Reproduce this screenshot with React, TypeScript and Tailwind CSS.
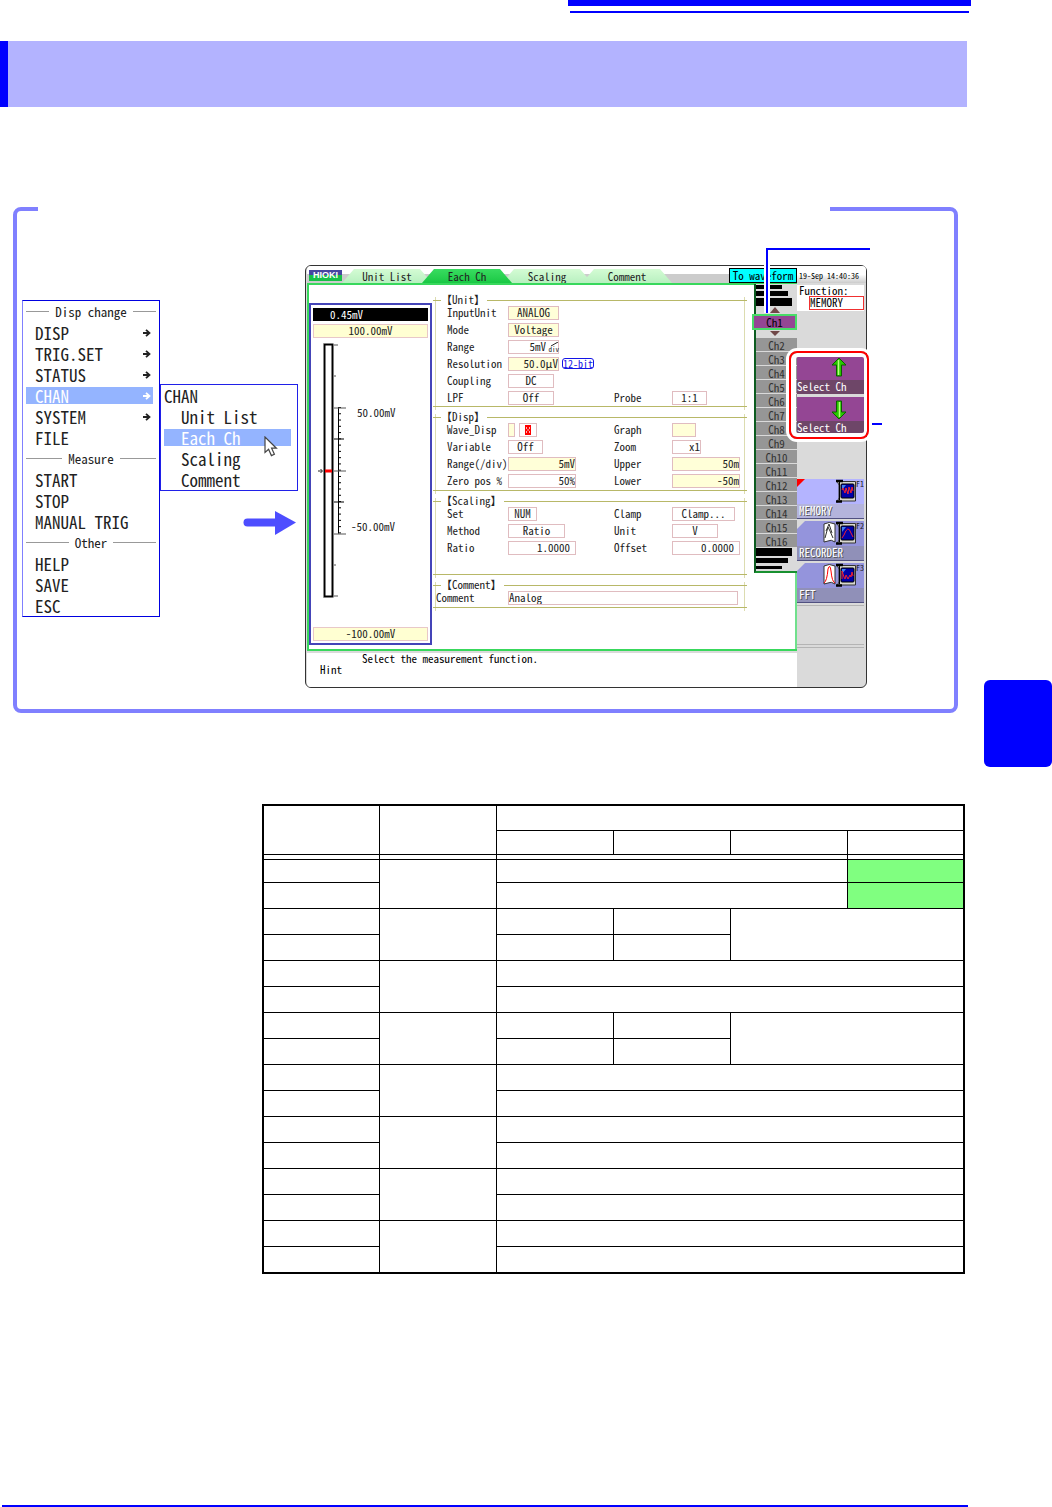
import { useState } from 'react'
import clsx from 'clsx'

const MENU = [
  {
    title: 'Disp change',
    items: ['DISP', 'TRIG.SET', 'STATUS', 'CHAN', 'SYSTEM', 'FILE'],
  },
  { title: 'Measure', items: ['START', 'STOP', 'MANUAL TRIG'] },
  { title: 'Other', items: ['HELP', 'SAVE', 'ESC'] },
]
const WITH_SUBMENU = ['DISP', 'TRIG.SET', 'STATUS', 'CHAN', 'SYSTEM']
const SUBMENU = ['Unit List', 'Each Ch', 'Scaling', 'Comment']
const CHANNELS = [2, 3, 4, 5, 6, 7, 8, 9, 10, 11, 12, 13, 14, 15, 16]

const MENU_ITEM =
  'mx-[3px] flex h-[21px] w-[127px] items-center border-y-2 border-transparent bg-clip-padding text-[17px] leading-[17px]'

function MenuArrow() {
  return (
    <svg width="8" height="8" viewBox="0 0 8 8" fill="none" stroke="currentColor" strokeWidth="1.8">
      <path d="M0 4H6.500M3 0.800L6.500 4L3 7.200" />
    </svg>
  )
}

function MainMenu() {
  return (
    <nav className="mt-[89px] w-[138px] shrink-0 border border-[#0000e0] border-l-[#8080ff] bg-white text-[#222]">
      {MENU.map((group) => (
        <div key={group.title}>
          <div className="flex h-[21px] items-center gap-1.5 px-[3px] text-[13px] leading-[21px]">
            <span className="h-px flex-1 bg-[#999]" />
            <span>{group.title}</span>
            <span className="h-px flex-1 bg-[#999]" />
          </div>
          {group.items.map((item) => (
            <button
              key={item}
              className={clsx(
                MENU_ITEM,
                'justify-between pr-0.5 pl-[9px]',
                item === 'CHAN' && 'bg-[#94b4ff] text-white',
              )}
            >
              {item}
              {WITH_SUBMENU.includes(item) && <MenuArrow />}
            </button>
          ))}
        </div>
      ))}
    </nav>
  )
}

function SubMenu() {
  return (
    <div className="mt-[173px] w-[138px] shrink-0">
      <nav className="relative border border-[#2020e8] bg-white text-[#222]">
        <div className="flex h-[21px] items-center pl-[3px] text-[17px] leading-[17px]">CHAN</div>
        {SUBMENU.map((item) => (
          <button
            key={item}
            className={clsx(MENU_ITEM, 'pl-[17px]', item === 'Each Ch' && 'bg-[#94b4ff] text-white')}
          >
            {item}
          </button>
        ))}
        <svg className="absolute top-[51px] left-[103px]" width="14" height="21" viewBox="0 0 14 21">
          <path
            d="M1 1V16.500L4.600 13.200L7.400 19.600L10.400 18.200L7.600 12.200H12.400Z"
            fill="#fff"
            stroke="#444"
            strokeWidth="1.2"
          />
        </svg>
      </nav>
      <svg className="mt-5 ml-[83px]" width="54" height="24" viewBox="0 0 54 24">
        <path d="M4.500 11.500H34" stroke="#4d4dff" strokeWidth="8" strokeLinecap="round" />
        <path d="M32 0L53 11.500L32 24Z" fill="#4d4dff" />
      </svg>
    </div>
  )
}

const TABS = ['Unit List', 'Each Ch', 'Scaling', 'Comment']

function TabBar({ active, onChange }: { active: string; onChange: (tab: string) => void }) {
  return (
    <div className="flex h-[17px] items-end rounded-tl bg-gradient-to-b from-white from-50% to-[#ccc] to-50% pl-[2px]">
      <div className="mb-0.5 h-[11px] w-[33px] bg-gradient-to-b from-[#4646a0] from-50% to-[#18c048] to-50% text-center font-['Liberation_Sans',sans-serif] text-[9px] leading-[11px] font-bold text-white">
        HIOKI
      </div>
      {TABS.map((tab) => (
        <button
          key={tab}
          onClick={() => onChange(tab)}
          className={clsx(
            'h-[14px] w-[90px] text-[11px] leading-[14px] text-[#222] [clip-path:polygon(12px_0,78px_0,100%_100%,0_100%)]',
            tab !== 'Unit List' && '-ml-[10px]',
            tab === active
              ? 'z-10 bg-gradient-to-b from-[#38dc60] to-[#18c844]'
              : 'bg-gradient-to-b from-[#d4fcd4] to-[#b8f0c0]',
          )}
        >
          {tab}
        </button>
      ))}
      <span className="flex-1" />
      <button className="h-[15px] w-[68px] border border-black bg-[#00ffff] text-center text-[11px] leading-[13px]">
        To waveform
      </button>
    </div>
  )
}

function Meter() {
  const minor = Array.from({ length: 21 }, (_, i) => 69 + i * 6.27)
  return (
    <div className="mt-[18px] flex h-[342px] w-[123px] shrink-0 flex-col border-2 border-[#4444b8] px-0.5 pt-0.5 pb-0.5 text-[11px] text-[#222]">
      <div className="mt-px mb-[3px] h-[13px] bg-black pl-[17px] leading-[13px] text-white">0.45mV</div>
      <div className="h-[14px] border border-[#e8c8c8] bg-[#ffffd2] text-center leading-[11px]">100.00mV</div>
      <svg className="flex-1" width="113" height="288" viewBox="0 0 113 288">
        <rect x="11.500" y="6" width="8" height="252" fill="#fff" stroke="#000" strokeWidth="2" />
        <path d="M10.500 5V259" stroke="#888" />
        <path d="M25.500 69V195" stroke="#000" />
        <g stroke="#000">
          {minor.map((y) => (
            <path key={y} d={`M25 ${y}H28`} />
          ))}
        </g>
        <g stroke="#555">
          <path d="M21 6.500H25M21 37.500H23M21 226.500H23M21 257.500H25" />
          <path d="M21 69.500H33M21 132.500H33M21 195.500H33" />
        </g>
        <path d="M21 100.500H31M21 163.500H31" stroke="#000" />
        <rect x="12" y="131" width="7" height="3" fill="#f00" />
        <path d="M5 132.500H9M7.500 130.500L9.500 132.500L7.500 134.500" fill="none" stroke="#222" />
        <text x="44" y="78" fontSize="11" fill="#222">50.00mV</text>
        <text x="38" y="192" fontSize="11" fill="#222">-50.00mV</text>
      </svg>
      <div className="h-[14px] border border-[#e8c8c8] bg-[#ffffd2] text-center leading-[11px]">-100.00mV</div>
    </div>
  )
}

interface FieldProps {
  label: string
  value: string
  className: string
  yellow?: boolean
}

function Field({ label, value, className, yellow }: FieldProps) {
  const id = 'field-' + label
  return (
    <>
      <label htmlFor={id} className="leading-[17px] whitespace-nowrap">{label}</label>
      <div className="flex h-[17px] items-center">
        <input
          id={id}
          defaultValue={value}
          className={clsx(
            'h-[14px] min-w-0 border border-[#e0bcc0] pb-0.5 leading-3',
            yellow ? 'bg-[#ffffd8]' : 'bg-white',
            className,
          )}
        />
        {label === 'Resolution' && (
          <span className="ml-[3px] h-[11px] w-8 shrink-0 rounded-[3px] border border-[#1414e6] text-center text-[10px] leading-[9px] whitespace-nowrap text-[#1414e6]">
            12-bit
          </span>
        )}
        {label === 'Range' && (
          <span className="-ml-3 flex w-3 flex-col items-end">
            <svg width="8" height="4" viewBox="0 0 8 4"><path d="M0 4L7 0" stroke="#222" /></svg>
            <span className="text-[7px] leading-[6px]">div</span>
          </span>
        )}
      </div>
    </>
  )
}

const TWO_COLUMNS = 'grid-cols-[61px_106px_58px_1fr] pl-[11px]'

function Group({ title, className, children }: { title: string; className: string; children: React.ReactNode }) {
  return (
    <section className="mx-[3px] border-x border-[#dcdcb0] pb-[3px]">
      <h3 className="-mx-[3px] flex h-[7px] items-center text-[11px] leading-[11px]">
        <span className="h-px w-2 bg-[#b8b868]" />
        <span className="pb-0.5">{title}</span>
        <span className="ml-0.5 h-px flex-1 bg-[#b8b868]" />
      </h3>
      <div className={clsx('grid', className)}>{children}</div>
      <div className="-mx-[3px] h-px bg-[#b8b868]" />
    </section>
  )
}

function ChannelForm() {
  return (
    <form className="mt-3 mr-1.5 flex min-w-0 flex-1 flex-col gap-1 text-[11px] text-[#222]">
      <Group title="【Unit】" className={TWO_COLUMNS}>
        <Field label="InputUnit" value="ANALOG" className="w-[51px] text-center" yellow />
        <span className="col-span-2" />
        <Field label="Mode" value="Voltage" className="w-[51px] text-center" yellow />
        <span className="col-span-2" />
        <Field label="Range" value="5mV" className="w-[51px] pr-3 text-right" />
        <span className="col-span-2" />
        <Field label="Resolution" value="50.0μV" className="w-[51px] text-right" yellow />
        <span className="col-span-2" />
        <Field label="Coupling" value="DC" className="w-[46px] text-center" />
        <span className="col-span-2" />
        <Field label="LPF" value="Off" className="w-[46px] text-center" />
        <Field label="Probe" value="1:1" className="w-[35px] text-center" />
      </Group>
      <Group title="【Disp】" className={clsx(TWO_COLUMNS, 'pb-px')}>
        <span className="leading-[17px]">Wave_Disp</span>
        <div className="flex items-center gap-1">
          <button type="button" aria-label="Wave display" className="h-[14px] w-[7px] border border-[#e0bcc0] bg-[#ffffd8]" />
          <button
            type="button"
            aria-label="Wave color"
            className="flex h-[14px] w-[18px] items-center justify-center border border-[#e0bcc0] bg-white"
          >
            <svg width="6" height="10" viewBox="0 0 6 10">
              <rect width="6" height="10" fill="#f00" />
              <path d="M1.500 2V4M4.500 2V4M3 4V6M1.500 6V8M4.500 6V8" stroke="#ffb0b0" />
            </svg>
          </button>
        </div>
        <Field label="Graph" value="" className="w-6" yellow />
        <Field label="Variable" value="Off" className="w-[35px] text-center" />
        <Field label="Zoom" value="x1" className="w-[29px] text-right" />
        <Field label="Range(/div)" value="5mV" className="w-[68px] text-right" yellow />
        <Field label="Upper" value="50m" className="w-[68px] text-right" yellow />
        <Field label="Zero pos %" value="50%" className="w-[68px] text-right" />
        <Field label="Lower" value="-50m" className="w-[68px] text-right" yellow />
      </Group>
      <Group title="【Scaling】" className={clsx(TWO_COLUMNS, 'pb-[18px]')}>
        <Field label="Set" value="NUM" className="w-[29px] text-center" />
        <Field label="Clamp" value="Clamp..." className="w-[63px] text-center" />
        <Field label="Method" value="Ratio" className="w-[57px] text-center" />
        <Field label="Unit" value="V" className="w-[46px] text-center" />
        <Field label="Ratio" value="1.0000" className="w-[68px] pr-[5px] text-right" />
        <Field label="Offset" value="0.0000" className="w-[68px] pr-[5px] text-right" />
      </Group>
      <Group title="【Comment】" className="grid-cols-[72px_1fr] pr-1.5 pb-px">
        <Field label="Comment" value="Analog" className="w-full" />
      </Group>
    </form>
  )
}

function ChannelList() {
  return (
    <div className="-mt-px flex h-[289px] w-[43px] shrink-0 flex-col border-b-2 border-l-2 border-b-[#189030] border-l-[#0c5c20] bg-[#dadada] text-center text-[11px] text-[#333]">
      <svg className="shrink-0" width="41" height="30" viewBox="0 0 41 30">
        <path d="M0 1H26V5H0ZM0 7H32V12H0ZM0 14H36V22H0Z" fill="#000" />
        <path d="M19 23L24 29H14Z" fill="#704848" />
      </svg>
      <button className="-ml-1 h-4 w-[45px] shrink-0 border-2 border-[#48dc68] bg-[#944694] leading-[10px] text-black">
        Ch1
      </button>
      <svg className="shrink-0" width="41" height="8" viewBox="0 0 41 8">
        <path d="M14 1H24L19 6Z" fill="#704848" />
      </svg>
      {CHANNELS.map((ch) => (
        <button key={ch} className="mb-px h-[13px] shrink-0 bg-[#969696] leading-3">
          Ch{ch}
        </button>
      ))}
      <svg className="shrink-0" width="41" height="23" viewBox="0 0 41 23">
        <path d="M0 0H36V8H0ZM0 10H32V15H0ZM0 18H26V21H0Z" fill="#000" />
      </svg>
    </div>
  )
}

function SelectKey({ down }: { down?: boolean }) {
  return (
    <button className="flex h-[38px] w-[67px] flex-col bg-[#944694] text-[11px] text-white">
      <svg className={clsx('ml-[33px] h-[24px] shrink-0', down && 'rotate-180')} width="18" height="24" viewBox="0 0 18 24">
        <path d="M9 2L16 9H11.500V20H6.500V9H2Z" fill="#28c800" stroke="#0a5c00" />
        <path d="M8.500 4V19" stroke="#b8ff80" strokeWidth="1.5" />
      </svg>
      <span className="h-[14px] w-full bg-[#6e4668] text-left leading-3">Select Ch</span>
    </button>
  )
}

function Monitor({ wave }: { wave: string }) {
  return (
    <g>
      <path d="M1 2L4 2.500H19.500V22H4L1 23L3 19V6Z" fill="#d8d8d0" stroke="#333" />
      <path d="M0 2H7M0 22.500H6" stroke="#000" strokeWidth="2.500" />
      <path d="M3.500 3V21" stroke="#000" />
      <rect x="5" y="5" width="13" height="14" rx="1" fill="#0000a8" stroke="#000" />
      <path d="M6 6H10L6 11Z" fill="#4080f0" />
      <path d={wave} fill="none" stroke="#f02030" />
    </g>
  )
}

const FUNCTIONS = [
  { name: 'MEMORY', key: 'F1', wave: 'M6 11L7 9L9 14L10 9L12 15L13 8L15 14L16 8L17 12' },
  { name: 'RECORDER', key: 'F2', wave: 'M6 17L8 14Q12 3 15 12L17 16' },
  { name: 'FFT', key: 'F3', wave: 'M6 16V8L8 14L9 16L10 12L12 16L14 12L15 14L16 9L17 13' },
]

function FunctionKey({ name, fkey, wave }: { name: string; fkey: string; wave: string }) {
  const active = name === 'MEMORY'
  return (
    <button
      className={clsx(
        'mb-[2px] flex h-[40px] w-[67px] flex-col border-b border-[#505080] text-[11px]',
        active ? 'bg-[#b4b4ff]' : 'bg-[#9494dc]',
      )}
    >
      <svg className="shrink-0" width="67" height="25" viewBox="0 0 67 25">
        <path d="M0 0H8L0 8Z" fill={active ? '#f00' : '#dadada'} />
        {!active && (
          <g>
            <path d="M27 3Q32 0 38 3V21Q34 18 31 20L27 21Z" fill="#fff" stroke="#333" />
            <path
              d={name === 'FFT' ? 'M27 20Q30 18 31 6Q33 0 34 8Q35 19 38 20' : 'M28 17L31 6L33 10L36 17M29 10L32 3L35 12'}
              fill="none"
              stroke={name === 'FFT' ? '#f00' : '#333'}
            />
          </g>
        )}
        <g transform="translate(39 0)">
          <Monitor wave={wave} />
        </g>
        <text x="59" y="8" fontSize="8" fill="#222">{fkey}</text>
      </svg>
      <span
        className={clsx(
          'h-[14px] w-full pl-0.5 text-left leading-3 text-white [text-shadow:1px_1px_0_#555]',
          active ? 'bg-[#b4b4dc]' : 'bg-[#9090b8]',
        )}
      >
        {name}
      </span>
    </button>
  )
}

function SoftKeys() {
  return (
    <div className="flex w-[69px] shrink-0 flex-col text-[11px]">
      <time className="h-[17px] rounded-tr bg-gradient-to-b from-white from-50% to-[#ccc] pl-[2px] text-[8px] leading-[19px]">
        19-Sep 14:40:36
      </time>
      <div className="mt-0.5 h-[26px] w-[67px] bg-white">
        <label htmlFor="function" className="block h-[11px] pl-[2px] leading-[11px]">Function:</label>
        <input
          id="function"
          defaultValue="MEMORY"
          className="ml-3 block h-[14px] w-[55px] border border-[#f03030] pb-0.5 leading-3"
        />
      </div>
      <div className="mt-[45px] flex flex-col gap-[3px]">
        <SelectKey />
        <SelectKey down />
      </div>
      <div className="mt-11 flex flex-col">
        {FUNCTIONS.map((f) => (
          <FunctionKey key={f.name} name={f.name} fkey={f.key} wave={f.wave} />
        ))}
      </div>
      <div className="h-10 w-[67px] border-y border-[#b4b4b4]" />
      <div className="mt-0.5 w-[67px] flex-1 border-t border-[#b4b4b4]" />
    </div>
  )
}

function Screen() {
  const [tab, setTab] = useState('Each Ch')
  return (
    <div className="relative mt-[54px] mr-[87px] ml-[7px] min-w-0 flex-1">
      <div className="flex h-[423px] rounded-md border border-[#333] bg-[#dadada] pl-px">
        <div className="flex min-w-0 flex-1 flex-col">
          <TabBar active={tab} onChange={setTab} />
          <div className="flex h-[368px] border-2 border-r-0 border-[#38d85c] bg-white">
            <Meter />
            <ChannelForm />
            <div className="flex flex-col">
              <ChannelList />
              <div className="flex-1 border-r-2 border-[#70e08c]" />
            </div>
          </div>
          <div className="mt-0.5 flex-1 rounded-bl bg-white text-[11px] leading-[11px]">
            <p className="pl-[55px]">Select the measurement function.</p>
            <p className="pl-[13px]">Hint</p>
          </div>
        </div>
        <SoftKeys />
      </div>
      {/* Callouts */}
      <svg className="absolute -top-[19px] -right-[3px]" width="106" height="67" viewBox="0 0 106 67" fill="none">
        <path d="M106 3H3V67" stroke="#fff" strokeWidth="6" />
        <path d="M106 3H3V67" stroke="#0000ff" strokeWidth="2" />
      </svg>
      <div className="absolute top-[86px] -right-0.5 h-[88px] w-20 rounded-lg border-2 border-[#f00] shadow-[0_0_0_3px_#fff,inset_1px_0_0_4px_#fff]" />
      <div className="absolute top-[158px] -right-[15px] h-0.5 w-2.5 bg-[#0000ff]" />
    </div>
  )
}

const CELL = 'border border-black p-0'

function RangeTable() {
  return (
    <table className="w-full table-fixed border-collapse border-2 border-black">
      <thead>
        <tr className="h-[25px]">
          <th rowSpan={2} className={CELL} />
          <th rowSpan={2} className={CELL} />
          <th colSpan={4} className={CELL} />
        </tr>
        <tr className="h-6">
          <th className={CELL} />
          <th className={CELL} />
          <th className={CELL} />
          <th className={CELL} />
        </tr>
        <tr className="h-[5px]">
          <td className={CELL} />
          <td className={CELL} />
          <td colSpan={3} className={CELL} />
          <td className={CELL} />
        </tr>
      </thead>
      <tbody>
        {['green', 'split', 'wide', 'split', 'wide', 'wide', 'wide', 'wide'].map((kind, g) =>
          [0, 1].map((r) => (
            <tr key={g + '-' + r} className={clsx(g === 0 && r === 0 ? 'h-[23px]' : 'h-[26px]', 'last:h-[27px]')}>
              <td className={CELL} />
              {r === 0 && <td rowSpan={2} className={CELL} />}
              {kind === 'wide' && <td colSpan={4} className={CELL} />}
              {kind === 'green' && <td colSpan={3} className={CELL} />}
              {kind === 'green' && <td className="border border-black bg-[#80ff80] p-0" />}
              {kind === 'split' && <td className={CELL} />}
              {kind === 'split' && <td className={CELL} />}
              {kind === 'split' && r === 0 && <td colSpan={2} rowSpan={2} className={CELL} />}
            </tr>
          )),
        )}
      </tbody>
    </table>
  )
}

export default function App() {
  return (
    <div className="flex items-start bg-white font-['Noto_Sans_Mono_CJK_JP','Liberation_Mono','Noto_Sans_CJK_JP',monospace] text-black">
      <main className="min-w-0 flex-1">
        <header className="mr-[13px] ml-[568px]">
          <div className="h-1.5 bg-[#0000ff]" />
          <div className="mx-0.5 mt-[5px] h-0.5 bg-[#0000ff]" />
        </header>
        <div className="mt-7 mr-[17px] h-[66px] border-l-8 border-[#0000ff] bg-[#b3b3ff]" />

        <section className="relative mt-[100px] mr-[26px] ml-[13px] flex items-start rounded-lg border-4 border-[#8080ff] pb-[21px] pl-[5px]">
          <div className="absolute -top-1 right-[124px] left-[21px] h-1 bg-white" />
          <MainMenu />
          <SubMenu />
          <Screen />
        </section>

        <div className="mt-[91px] mr-[19px] ml-[262px]">
          <RangeTable />
        </div>
        <footer className="mt-[231px] mr-4 ml-0.5 h-0.5 bg-[#0000ff]" />
      </main>
      <aside className="mt-[680px] h-[87px] w-[68px] shrink-0 rounded-md bg-[#0000ff]" />
    </div>
  )
}
